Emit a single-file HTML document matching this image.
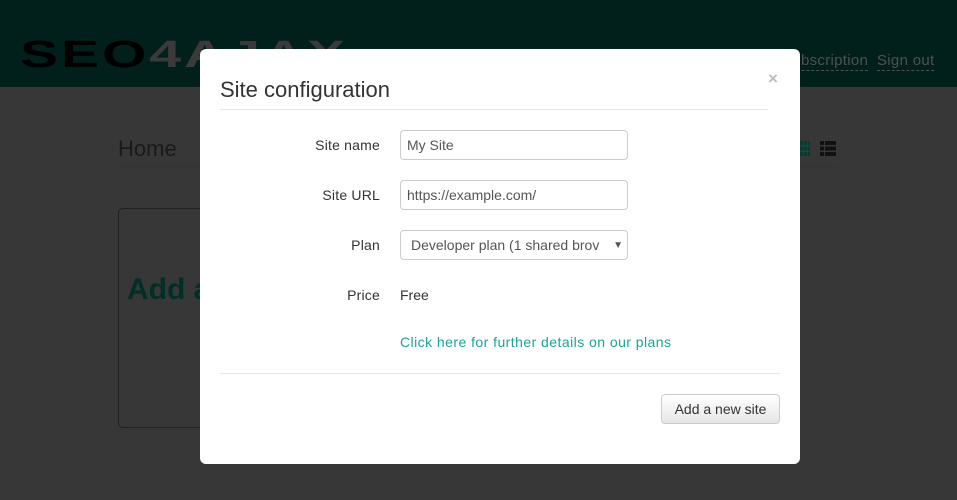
<!DOCTYPE html>
<html><head><meta charset="utf-8"><style>
*{box-sizing:border-box;margin:0;padding:0}
body{width:957px;height:500px;overflow:hidden;background:#373737;font-family:"Liberation Sans",sans-serif;position:relative}
.hdr{position:absolute;left:0;top:0;width:957px;height:87px;background:#01201c}
.logo{position:absolute;left:20px;top:36px;font:900 38px/38px "Liberation Sans",sans-serif;letter-spacing:2px;transform:scaleX(1.5);transform-origin:left;color:#000}
.logo span{color:#3a3a3a}
.nav{position:absolute;top:52px;font-size:15px;color:#505050;border-bottom:1px dashed #505050;line-height:18px;letter-spacing:0.3px}
.home{position:absolute;left:118px;top:136px;font-size:22px;color:#1a1a1a}
.hline{position:absolute;left:118px;top:166px;width:720px;height:1px;background:#333}
.card{position:absolute;left:118px;top:208px;width:200px;height:220px;border:1px solid #222;border-radius:5px}
.card b{position:absolute;left:8px;top:64px;font-size:30px;color:#022e28}
.modal{position:absolute;left:200px;top:49px;width:600px;height:415px;background:#fff;border-radius:6px}
.title{position:absolute;left:20px;top:28px;font-size:22px;color:#333}
.x{position:absolute;left:568px;top:20px;font-size:17px;font-weight:bold;color:#bbb}
.l1{position:absolute;left:20px;top:60px;width:548px;height:1px;background:#e5e5e5}
.lab{position:absolute;right:420px;font-size:14px;color:#333;letter-spacing:0.2px}
.inp{position:absolute;left:200px;width:228px;height:30px;border:1px solid #ccc;border-radius:4px;font-size:14px;color:#555;padding:6px 6px;line-height:16px}
.txt{position:absolute;left:200px;font-size:14px;color:#333}
.lnk{color:#1aa39a;letter-spacing:0.45px}
.l2{position:absolute;left:20px;top:324px;width:560px;height:1px;background:#e5e5e5}
.btn{position:absolute;left:461px;top:345px;width:119px;height:30px;border:1px solid #ccc;border-radius:4px;background:linear-gradient(#fff,#e6e6e6);font-size:14px;color:#333;text-align:center;line-height:28px}
.g{position:absolute;width:3px;height:4px;background:#063a33}
</style></head><body>
<div class="hdr">
<div class="logo">SEO<span>4AJAX</span></div>
<div class="nav" style="left:782px">Subscription</div>
<div class="nav" style="left:877px">Sign out</div>
</div>
<div class="home">Home</div>
<div class="hline"></div>
<div style="position:absolute;left:800px;top:141px;width:10px;height:15px;background:repeating-linear-gradient(90deg,#063a33 0 3px,transparent 3px 4px),transparent;-webkit-mask:repeating-linear-gradient(#000 0 4px,transparent 4px 5.5px);mask:repeating-linear-gradient(#000 0 4px,transparent 4px 5.5px)"></div>
<div style="position:absolute;left:820px;top:141px;width:4px;height:15px;background:repeating-linear-gradient(#111 0 4px,transparent 4px 5.5px)"></div>
<div style="position:absolute;left:825px;top:141px;width:11px;height:15px;background:repeating-linear-gradient(#111 0 4px,transparent 4px 5.5px)"></div>
<div class="card"><b>Add a</b></div>
<div class="modal">
<div class="title">Site configuration</div>
<div class="x">×</div>
<div class="l1"></div>
<div class="lab" style="top:88px">Site name</div>
<div class="inp" style="top:81px">My Site</div>
<div class="lab" style="top:138px">Site URL</div>
<div class="inp" style="top:131px">https://example.com/</div>
<div class="lab" style="top:188px">Plan</div>
<div class="inp" style="top:181px;white-space:nowrap;overflow:hidden;padding-left:10px">Developer plan (1 shared brov<span style="position:absolute;right:4px;top:7px;font-size:10px;background:#fff;padding-left:4px">▼</span></div>
<div class="lab" style="top:238px">Price</div>
<div class="txt" style="top:238px">Free</div>
<div class="txt lnk" style="top:285px">Click here for further details on our plans</div>
<div class="l2"></div>
<div class="btn">Add a new site</div>
</div>
</body></html>
